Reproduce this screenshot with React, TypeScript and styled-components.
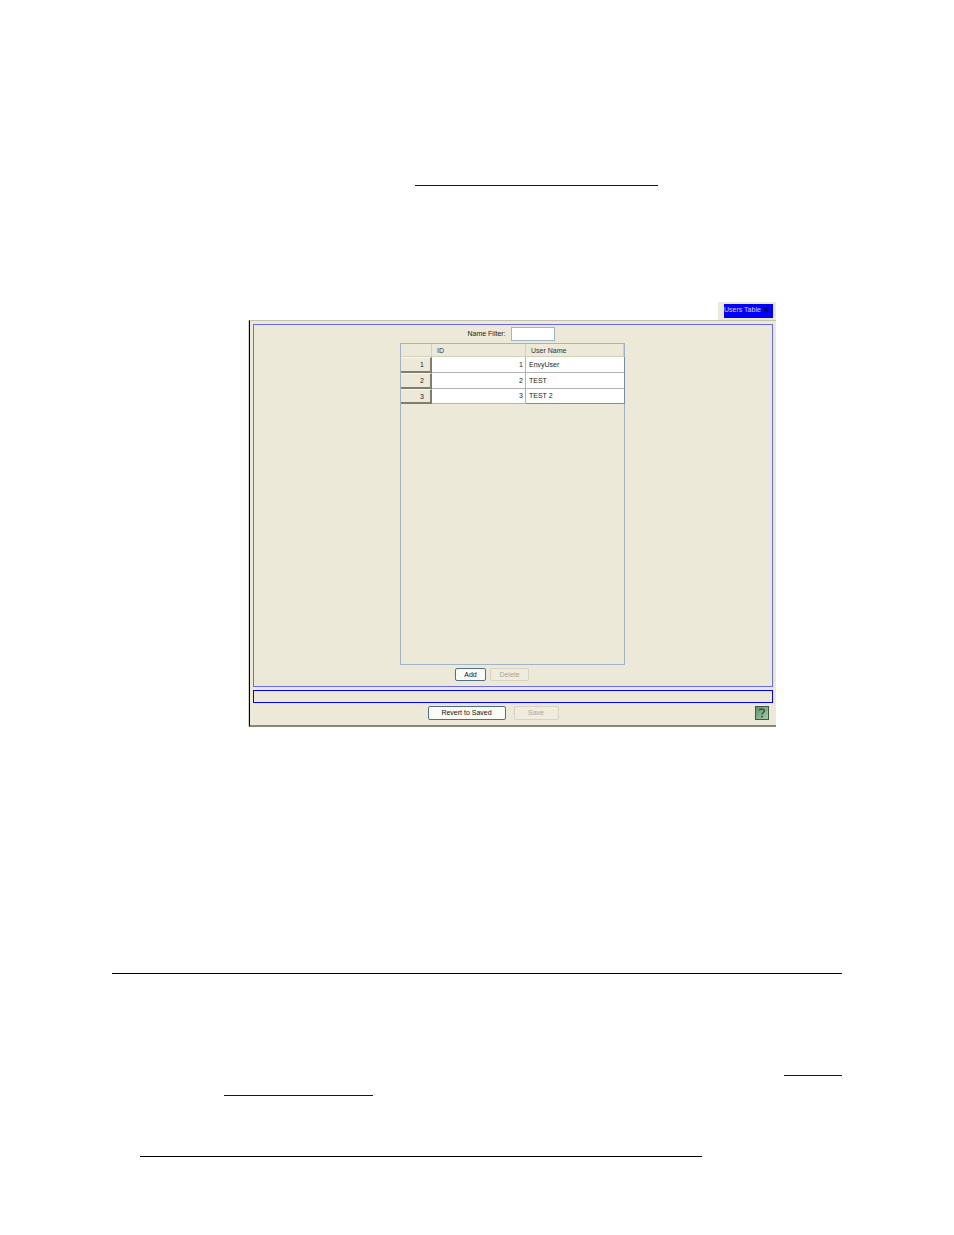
import styled, { createGlobalStyle } from 'styled-components'

const GlobalStyle = createGlobalStyle`
    html, body {
        margin: 0;
        padding: 0;
        background: #ffffff;
    }
    body {
        font-family: "Liberation Sans", Arial, sans-serif;
    }
`

const Page = styled.div`
    width: 954px;
    height: 1235px;
    display: flex;
    flex-direction: column;
    overflow: hidden;
`

// leftover underlines of the document text
const Rule = styled.div<{ $top: number, $left: number, $width: number, $link?: boolean }>`
    height: 1px;
    flex: none;
    margin-top: ${p => p.$top}px;
    margin-left: ${p => p.$left}px;
    width: ${p => p.$width}px;
    background: ${p => p.$link ? '#0000c0' : '#000000'};
`

const AppWindow = styled.div`
    flex: none;
    width: 527px;
    margin-left: 249px;
    margin-top: 116px;
    display: flex;
    flex-direction: column;
`

const TabRow = styled.div`
    height: 18px;
    display: flex;
    justify-content: flex-end;
`

const Tab = styled.div`
    width: 58px;
    padding: 2px 3px 2px 6px;
    box-sizing: border-box;
    background: #ece9d8;
    display: flex;
`

const TabTitle = styled.div`
    flex: 1;
    background: #0000ff;
    color: #d8d8ff;
    font-size: 7px;
    line-height: 12px;
    display: flex;
    justify-content: space-between;
    padding-right: 4px;
`

const TabClose = styled.span`
    color: #00003a;
    font-size: 10px;
    font-weight: bold;
`

const Panel = styled.div`
    height: 407px;
    box-sizing: border-box;
    background: #ece9d8;
    border-top: 1px solid #c4c1ac;
    border-left: 1px solid #000000;
    border-bottom: 2px solid #8a8878;
    box-shadow: -1px 0 0 #d8d6c6;
    padding: 3px 3px 0 3px;
    display: flex;
    flex-direction: column;
`

const MainBox = styled.div`
    height: 363px;
    flex: none;
    box-sizing: border-box;
    border: 1px solid #6a6af0;
    display: flex;
    flex-direction: column;
    align-items: center;
`

const FilterRow = styled.div`
    height: 14px;
    margin-top: 2px;
    display: flex;
    align-items: center;
    gap: 5px;
    margin-left: -4px;
`

const SmallLabel = styled.span`
    font-size: 7px;
    line-height: 12px;
    margin-top: -1px;
    color: #222222;
`

const FilterInput = styled.div`
    width: 44px;
    height: 14px;
    box-sizing: border-box;
    background: #ffffff;
    border: 1px solid #9fb4c6;
`

const TableFrame = styled.div`
    width: 225px;
    height: 322px;
    margin-top: 2px;
    margin-left: -1px;
    box-sizing: border-box;
    border: 1px solid #9db5c6;
    display: flex;
    flex-direction: column;
`

const HeaderRow = styled.div`
    height: 13px;
    flex: none;
    box-sizing: border-box;
    display: grid;
    grid-template-columns: 31px 94px 1fr;
    border-bottom: 1px solid #d2cfbc;
`

const HeaderCell = styled.div<{ $pad: number }>`
    font-size: 7px;
    line-height: 13px;
    color: #333333;
    padding-left: ${p => p.$pad}px;
    border-right: 1px solid #d2cfbc;
`

const Rows = styled.div`
    border-right: 1px solid #6f8ea3;
    margin-right: -1px;
`

const DataRow = styled.div<{ $height: number }>`
    height: ${p => p.$height}px;
    display: grid;
    grid-template-columns: 31px 94px 1fr;
    grid-template-rows: 100%;
    font-size: 7px;
    color: #222222;
    line-height: ${p => p.$height - 1}px;
`

const RowHead = styled.div`
    box-sizing: border-box;
    background: #ece9d8;
    text-align: right;
    padding-right: 6px;
    border-right: 2px solid #7f7d6e;
    border-bottom: 2px solid #7f7d6e;
    border-top: 1px solid #f8f6ee;
    line-height: 13px;
`

const NumberCell = styled.div`
    box-sizing: border-box;
    background: #ffffff;
    text-align: right;
    padding-right: 2px;
    border-right: 1px solid #b4b4b4;
    border-bottom: 1px solid #b4b4b4;
`

const NameCell = styled.div<{ $last?: boolean }>`
    box-sizing: border-box;
    background: #ffffff;
    padding-left: 3px;
    border-bottom: 1px solid ${p => p.$last ? '#6f8ea3' : '#b4b4b4'};
`

const ButtonRow = styled.div`
    display: flex;
    gap: 4px;
    margin-top: 3px;
    margin-left: -42px;
`

const XpButton = styled.button<{ $width: number, $height: number, $disabled?: boolean }>`
    width: ${p => p.$width}px;
    height: ${p => p.$height}px;
    box-sizing: border-box;
    padding: 0 0 ${p => p.$height - 13}px;
    border-radius: 2px;
    font-family: inherit;
    font-size: 7px;
    color: ${p => p.$disabled ? '#a8a698' : '#111111'};
    background: ${p => p.$disabled ? '#efecdf' : '#fbfbf6'};
    border: 1px solid ${p => p.$disabled ? '#d6d3c2' : '#4f6f88'};
`

const StatusBox = styled.div`
    height: 13px;
    flex: none;
    margin-top: 3px;
    box-sizing: border-box;
    border: 1px solid #0000ff;
`

const BottomBar = styled.div`
    position: relative;
    display: flex;
    justify-content: center;
    gap: 8px;
    margin-top: 3px;
    padding-right: 40px;
`

const HelpIcon = styled.svg`
    position: absolute;
    right: 4px;
    top: 0;
`

export default function App() {
    const users = [
        { id: 1, name: 'EnvyUser', height: 16 },
        { id: 2, name: 'TEST', height: 16 },
        { id: 3, name: 'TEST 2', height: 15 },
    ]

    return <Page>
        <GlobalStyle />
        <Rule $top={185} $left={415} $width={243} $link />
        <AppWindow>
            <TabRow>
                <Tab>
                    <TabTitle>Users Table<TabClose>×</TabClose></TabTitle>
                </Tab>
            </TabRow>
            <Panel>
                <MainBox>
                    <FilterRow>
                        <SmallLabel>Name Filter:</SmallLabel>
                        <FilterInput />
                    </FilterRow>
                    <TableFrame>
                        <HeaderRow>
                            <HeaderCell $pad={0} />
                            <HeaderCell $pad={5}>ID</HeaderCell>
                            <HeaderCell $pad={5}>User Name</HeaderCell>
                        </HeaderRow>
                        <Rows>
                            {users.map((u, index) =>
                                <DataRow key={'user-' + u.id} $height={u.height}>
                                    <RowHead>{u.id}</RowHead>
                                    <NumberCell>{u.id}</NumberCell>
                                    <NameCell $last={index === users.length - 1}>{u.name}</NameCell>
                                </DataRow>
                            )}
                        </Rows>
                    </TableFrame>
                    <ButtonRow>
                        <XpButton $width={31} $height={13}>Add</XpButton>
                        <XpButton $width={39} $height={13} $disabled>Delete</XpButton>
                    </ButtonRow>
                </MainBox>
                <StatusBox />
                <BottomBar>
                    <XpButton $width={78} $height={14}>Revert to Saved</XpButton>
                    <XpButton $width={45} $height={14} $disabled>Save</XpButton>
                    <HelpIcon width="14" height="14" viewBox="0 0 14 14">
                        <defs>
                            <linearGradient id="help-bg" x1="0" y1="0" x2="1" y2="1">
                                <stop offset="0" stopColor="#5f8f6c" />
                                <stop offset="1" stopColor="#a6cfa8" />
                            </linearGradient>
                        </defs>
                        <rect x="0.5" y="0.5" width="13" height="13" fill="url(#help-bg)" stroke="#3f5a48" />
                        <path d="M4.5 4.5 C4.5 2.5 9.5 2.5 9.5 4.8 C9.5 6.5 7 6.5 7 8.6" fill="none" stroke="#2f4a38" strokeWidth="1.3" />
                        <rect x="6.2" y="9.8" width="1.6" height="1.6" fill="#2f4a38" />
                    </HelpIcon>
                </BottomBar>
            </Panel>
        </AppWindow>
        <Rule $top={246} $left={112} $width={730} />
        <Rule $top={101} $left={784} $width={58} $link />
        <Rule $top={19} $left={224} $width={149} $link />
        <Rule $top={60} $left={140} $width={562} />
    </Page>
}
